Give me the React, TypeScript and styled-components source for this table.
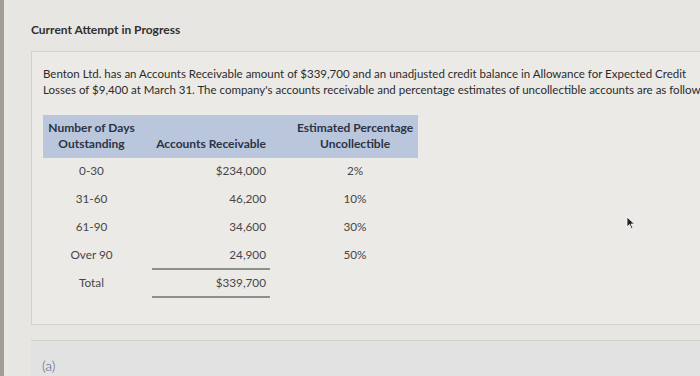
import React from "react";
import styled, { createGlobalStyle } from "styled-components";

const Global = createGlobalStyle`
  html, body { margin: 0; padding: 0; }
  body {
    background: #e7e6e2;
    font-family: Lato, "Open Sans", sans-serif;
    overflow: hidden;
    width: 700px;
    height: 376px;
  }
`;

const Page = styled.div`
  position: relative;
  width: 700px;
  height: 376px;
  box-sizing: border-box;
  border-left: 4px solid #a29e96;
  padding: 21px 0 0 27px;
  overflow: hidden;
`;

const Title = styled.h2`
  margin: 0 0 12px 0;
  font-size: 12px;
  font-weight: 700;
  color: #2f2f2f;
  line-height: 18px;
`;

const Card = styled.section`
  width: 720px;
  box-sizing: border-box;
  background: #eceae6;
  border: 1px solid #d2d1cd;
  padding: 14px 0 28px 11px;
  height: 274px;
`;

const Para = styled.p`
  margin: 0 0 17px 0;
  font-size: 11.5px;
  line-height: 16px;
  color: #2b2b2b;
  white-space: nowrap;
`;

const Table = styled.div`
  display: flex;
  flex-direction: column;
  width: 375px;
`;

const HeadBand = styled.div`
  display: grid;
  grid-template-columns: 97px 130px 22px 126px;
  height: 43px;
  background: #b9c6dc;
`;

const HeadCell = styled.div<{ $align: "center" | "right" }>`
  display: flex;
  align-items: flex-end;
  justify-content: ${(p) => (p.$align === "right" ? "flex-end" : "center")};
  text-align: ${(p) => p.$align};
  padding: 0 ${(p) => (p.$align === "right" ? "4px" : "0")} 6px 0;
  font-size: 12px;
  font-weight: 700;
  line-height: 16px;
  color: #2c3444;
`;

const Body = styled.div`
  display: grid;
  grid-template-columns: 97px 130px 22px 126px;
  grid-auto-rows: 28px;
`;

const Cell = styled.div<{ $align: "center" | "right"; $line?: boolean }>`
  display: flex;
  align-items: center;
  justify-content: ${(p) => (p.$align === "right" ? "flex-end" : "center")};
  font-size: 11.75px;
  color: #474747;
  padding-right: ${(p) => (p.$align === "right" ? "4px" : "0")};
  margin-left: ${(p) => (p.$align === "right" ? "12px" : "0")};
  border-bottom: 2px solid ${(p) => (p.$line ? "#8e8e8c" : "transparent")};
  box-sizing: border-box;
  padding-bottom: 1px;
`;

const Spacer = styled.div``;

const PartBox = styled.section`
  width: 720px;
  box-sizing: border-box;
  margin-top: 15px;
  height: 60px;
  background: #e1e2e1;
  border-top: 1px solid #d0d0ce;
  padding: 14px 0 0 11px;
`;

const PartLabel = styled.span`
  font-size: 14px;
  color: #4f6088;
  font-weight: 300;
`;

const Cursor = styled.svg`
  position: absolute;
  left: 622px;
  top: 216px;
`;

const rows = [
  { days: "0-30", ar: "$234,000", pct: "2%" },
  { days: "31-60", ar: "46,200", pct: "10%" },
  { days: "61-90", ar: "34,600", pct: "30%" },
  { days: "Over 90", ar: "24,900", pct: "50%", line: true },
  { days: "Total", ar: "$339,700", pct: "", line: true },
];

export default function App() {
  return (
    <>
      <Global />
      <Page>
        <Title>Current Attempt in Progress</Title>
        <Card>
          <Para>
            Benton Ltd. has an Accounts Receivable amount of $339,700 and an unadjusted credit balance in Allowance for Expected Credit
            <br />
            Losses of $9,400 at March 31. The company's accounts receivable and percentage estimates of uncollectible accounts are as follows:
          </Para>
          <Table>
            <HeadBand>
              <HeadCell $align="center">
                Number of Days
                <br />
                Outstanding
              </HeadCell>
              <HeadCell $align="right">Accounts Receivable</HeadCell>
              <Spacer />
              <HeadCell $align="center">
                Estimated Percentage
                <br />
                Uncollectible
              </HeadCell>
            </HeadBand>
            <Body>
              {rows.map((r) => (
                <React.Fragment key={r.days}>
                  <Cell $align="center">{r.days}</Cell>
                  <Cell $align="right" $line={r.line}>
                    {r.ar}
                  </Cell>
                  <Spacer />
                  <Cell $align="center">{r.pct}</Cell>
                </React.Fragment>
              ))}
            </Body>
          </Table>
        </Card>
        <PartBox>
          <PartLabel>(a)</PartLabel>
        </PartBox>
        <Cursor width="10" height="14" viewBox="0 0 10 14">
          <path d="M1 1 L1 11 L3.5 8.5 L5.5 13 L7 12.3 L5 8 L8.5 8 Z" fill="#222" stroke="#fff" strokeWidth="0.8" />
        </Cursor>
      </Page>
    </>
  );
}
